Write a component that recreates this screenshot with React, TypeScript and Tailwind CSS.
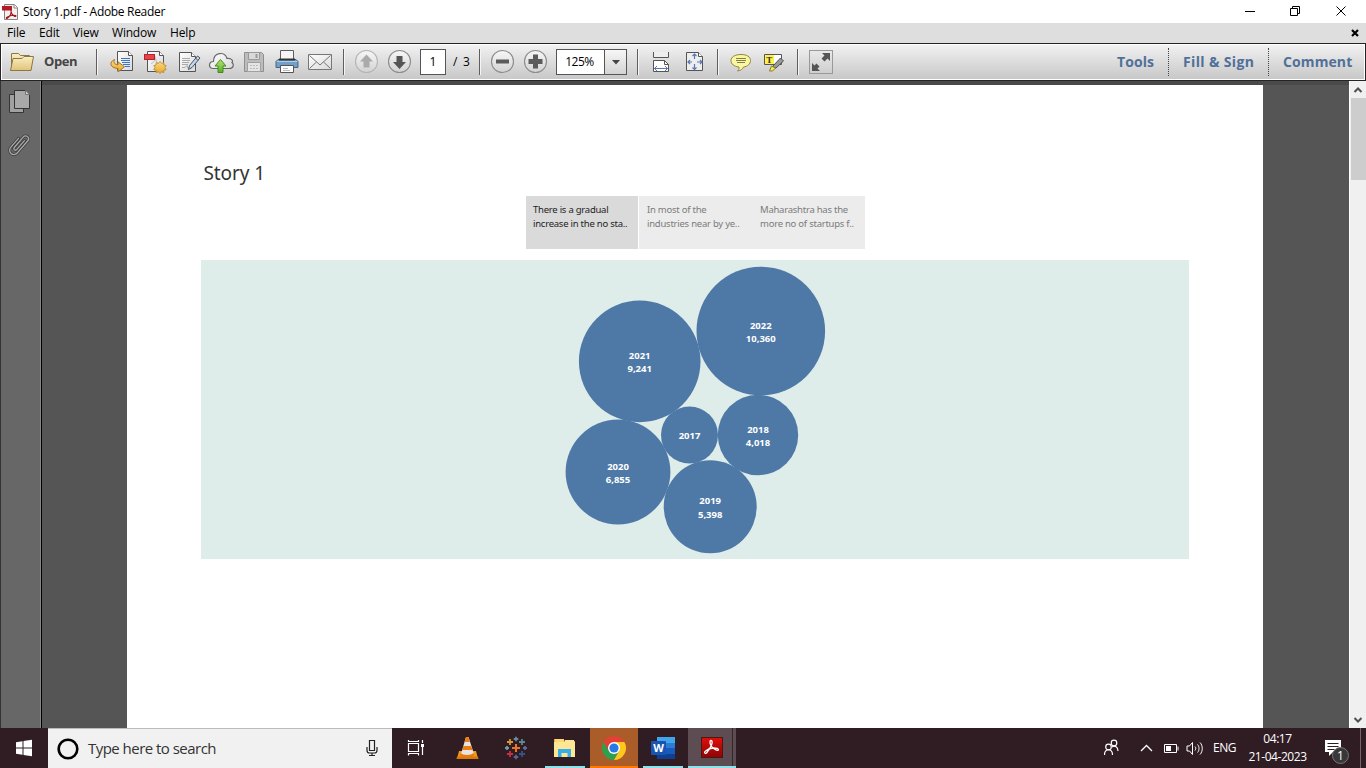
import type { ReactNode } from "react";

const ui = "font-['Open_Sans','Noto_Sans',sans-serif] whitespace-nowrap";

function Slot({ w = 33, children }: { w?: number; children: ReactNode }) {
  return (
    <svg width={w} height={34} viewBox={`0 0 ${w} 34`} className="shrink-0" fill="none">
      {children}
    </svg>
  );
}

function Divider({ className = "" }: { className?: string }) {
  return <div className={`h-[26px] w-[2px] shrink-0 border-l border-[#5e5e5e] bg-[#f5f5f5] ${className}`} />;
}

function RoundButton({ faded = false, children }: { faded?: boolean; children: ReactNode }) {
  return (
    <Slot>
      <circle cx="16.5" cy="16.5" r="11" fill="url(#btn)" stroke={faded ? "#b5b5b5" : "#8c8c8c"} strokeWidth="1.1" />
      {children}
    </Slot>
  );
}

function Defs() {
  return (
    <svg width="0" height="0" className="absolute">
      <defs>
        <linearGradient id="btn" x1="0" y1="0" x2="0" y2="1">
          <stop offset="0" stopColor="#f8f8f8" />
          <stop offset="1" stopColor="#d2d2d2" />
        </linearGradient>
        <linearGradient id="paper" x1="0" y1="0" x2="1" y2="1">
          <stop offset="0" stopColor="#fff" />
          <stop offset="1" stopColor="#d9d9d9" />
        </linearGradient>
        <linearGradient id="gold" x1="0" y1="0" x2="0" y2="1">
          <stop offset="0" stopColor="#fbdc7d" />
          <stop offset="1" stopColor="#e5a52f" />
        </linearGradient>
        <linearGradient id="manila" x1="0" y1="0" x2="0" y2="1">
          <stop offset="0" stopColor="#fbeec0" />
          <stop offset="1" stopColor="#dfc378" />
        </linearGradient>
        <linearGradient id="green" x1="0" y1="0" x2="0" y2="1">
          <stop offset="0" stopColor="#b6e86c" />
          <stop offset="1" stopColor="#58ad27" />
        </linearGradient>
        <linearGradient id="acro" x1="0" y1="0" x2="0" y2="1">
          <stop offset="0" stopColor="#e00f0b" />
          <stop offset="1" stopColor="#8c0505" />
        </linearGradient>
      </defs>
    </svg>
  );
}

function TitleBar() {
  return (
    <div className="flex h-[23px] shrink-0 items-center bg-white pl-[2px] pr-[20px]">
      <svg width="17" height="18" viewBox="0 0 17 18" fill="none">
        <path d="M2.500 1.500h10l3 3v12h-13z" fill="#f4f0ee" stroke="#8b8481" />
        <path d="M12 1.500v3.500h3.500" stroke="#8b8481" fill="#fff" />
        <path d="M9 7c.8 3-1 7-4 8.500-1 .2-.8-.8 0-1.300 3-1.700 6-2.200 8.500-1.700 1 .6 0 1.300-1 .8C10.500 12.300 9 10 9 7z" stroke="#a4141c" strokeWidth="1.100" />
        <rect x="0" y="3" width="10" height="4.500" fill="#b51a22" />
      </svg>
      <span className={`${ui} ml-[4px] text-[12px] leading-[22px] tracking-[-0.31px] text-black`}>Story 1.pdf - Adobe Reader</span>
      <div className="flex-1" />
      <svg width="102" height="12" viewBox="0 0 102 12" fill="none" stroke="#000" className="mb-[2px]">
        <path d="M1 6.500h10" />
        <path d="M46.500 3.500h7v7h-7zM48.500 3.500v-2h7v7h-2" />
        <path d="M92.500 1.500l9 9M101.500 1.500l-9 9" />
      </svg>
    </div>
  );
}

function MenuBar() {
  return (
    <div className={`${ui} flex h-[20px] shrink-0 items-center bg-[#dedede] pl-[7px] pr-[7px] text-[12px] leading-[20px] tracking-[-0.15px] text-black`}>
      <span className="w-[32px]">File</span>
      <span className="w-[34px]">Edit</span>
      <span className="w-[39px]">View</span>
      <span className="w-[58px] tracking-[-0.2px]">Window</span>
      <span>Help</span>
      <div className="flex-1" />
      <svg width="8" height="8" viewBox="0 0 8 8" stroke="#000" strokeWidth="2.200">
        <path d="M1 1l6 6M7 1L1 7" />
      </svg>
    </div>
  );
}

function Toolbar() {
  return (
    <div className="h-[38px] shrink-0 border border-[#242424] bg-white p-px">
      <div className="flex h-[34px] items-center bg-gradient-to-b from-[#f1f1f1] to-[#c8c8c8]">
        <Slot w={42}>
          <path d="M9.500 8.500h7l2 2h9v3h3l-2 12h-19z" fill="url(#manila)" stroke="#8b7849" />
          <path d="M8.500 25.500l2.500-12h9l2-2h9.500l-2.500 14z" fill="url(#manila)" stroke="#8b7849" />
        </Slot>
        <span className={`${ui} w-[52px] text-[13px] font-bold tracking-[-0.4px] text-[#454545]`}>Open</span>
        <Divider />
        <div className="w-[8px]" />
        <Slot>
          <g transform="translate(11 6)">
            <path d="M.5 .5h11l4 4v15h-15z" fill="url(#paper)" stroke="#555" />
            <path d="M11.500 .5v4h4" fill="#fff" stroke="#555" />
            <path d="M4 7.500h9M4 9.500h9M5 11.500h8M6 13.500h7M8 15.500h5" stroke="#3a78c5" />
          </g>
          <path d="M8.500 14.500c-5.500 2.500-5 8.500 3.500 9v3.500l6.500-5.200-6.500-5v3c-4-.3-4.500-2.500-3.500-5.300z" fill="url(#gold)" stroke="#a8741e" />
        </Slot>
        <Slot>
          <g transform="translate(8 6)">
            <path d="M.5 .5h12l4 4v16h-16z" fill="url(#paper)" stroke="#555" />
            <path d="M12.500 .5v4h4" fill="#fff" stroke="#555" />
            <path d="M4 12.500c3-1 5-4 4.500-7M9 8c0 3 1 4 3 5" stroke="#bbb" />
          </g>
          <rect x="5.500" y="9.500" width="10" height="5" fill="#e8434a" stroke="#b3252e" />
          <path d="M21 16.500l1.500 1.900 2.300-.8.1 2.400 2.300.6-1.200 2 1.200 2-2.300.6-.1 2.400-2.300-.8-1.500 1.800-1.500-1.800-2.300.8-.1-2.400-2.300-.6 1.200-2-1.200-2 2.300-.6.1-2.400 2.300.8z" fill="url(#gold)" stroke="#bd8429" strokeWidth=".8" />
        </Slot>
        <Slot>
          <g transform="translate(7 7)">
            <path d="M.5 .5h12l4 4v15h-16z" fill="url(#paper)" stroke="#555" />
            <path d="M12.500 .5v4h4" fill="#fff" stroke="#555" />
            <path d="M3 6.500h8M3 8.500h8M3 10.500h7M3 12.500h6M3 15.500h3l2-2 1 3" stroke="#aaa" />
          </g>
          <path d="M25.500 11l2.500 2-8 9.500-3.500 2 1-4z" fill="#c2d8ee" stroke="#45535f" />
          <path d="M23.500 13l2.500 2.500" stroke="#45535f" />
        </Slot>
        <Slot>
          <path d="M8 23.500c-5 0-4.500-7 .5-7 0-9 11-11 13.500-3 5-.5 6.500 3 5 4 2.500 2 1.500 6-3 6z" fill="url(#paper)" stroke="#666" strokeWidth="1.200" />
          <path d="M15.500 14.500l5.500 6.500h-3v6.500h-5V21h-3z" fill="url(#green)" stroke="#458b22" />
        </Slot>
        <Slot>
          <path d="M6.500 7.500h17l2 2v17h-19z" fill="#bcbcbc" stroke="#8f8f8f" />
          <path d="M10.500 7.500h11v7h-11z" fill="#d9d9d9" stroke="#999" />
          <path d="M17.500 9h2v4h-2z" fill="#999" />
          <path d="M9.500 17.500h13v9h-13z" fill="#e4e4e4" stroke="#a0a0a0" />
          <path d="M12 20.500h8M12 23.500h8" stroke="#bbb" strokeDasharray="2 1" />
        </Slot>
        <Slot>
          <path d="M9.500 5.500h13v10h-13z" fill="#f5f5f5" stroke="#5e5e5e" />
          <path d="M7 14.500h18l2 2v6h-22v-6z" fill="#72a0ca" stroke="#476480" />
          <path d="M6 16.500h20" stroke="#add0ed" />
          <path d="M8 14.500h16" stroke="#333" strokeWidth="2" />
          <path d="M9.500 20.500h13v7h-13z" fill="#fff" stroke="#555" />
          <path d="M12 23.500h5M12 25.500h7" stroke="#bbb" />
        </Slot>
        <Slot>
          <path d="M4.500 9.500h23v15h-23z" fill="url(#paper)" stroke="#777" />
          <path d="M5.500 10.500L16 20l10.500-9.500M5.500 23.500l7-6.500M26.500 23.500L19.500 17" stroke="#777" />
        </Slot>
        <div className="w-[6px]" />
        <Divider />
        <div className="w-[5px]" />
        <RoundButton faded>
          <path d="M16.500 9.500l6.500 7h-3.500v6h-6v-6H10z" fill="#aaa" />
        </RoundButton>
        <RoundButton>
          <path d="M16.500 24l-6.500-7h3.500v-6h6v6H23z" fill="#555" />
        </RoundButton>
        <div className={`${ui} ml-[4px] flex h-[26px] w-[26px] items-center justify-center border border-[#555] bg-white text-[12px]`}>1</div>
        <span className={`${ui} ml-[7px] w-[26px] text-[12px] tracking-[1.200px]`}>/ 3</span>
        <Divider />
        <div className="w-[5px]" />
        <RoundButton>
          <path d="M10 14.500h13v4H10z" fill="#5b5b5b" />
        </RoundButton>
        <RoundButton>
          <path d="M14 9.500h5V14h4.500v5H19v4.500h-5V19H9.500v-5H14z" fill="#5b5b5b" />
        </RoundButton>
        <div className={`${ui} ml-[4px] flex h-[26px] w-[71px] border border-[#555] bg-white text-[12px]`}>
          <span className="flex w-[47px] items-center justify-center pr-[2px] tracking-[-0.5px]">125%</span>
          <span className="flex flex-1 items-center justify-center border-l border-[#555] bg-gradient-to-b from-[#f7f7f7] to-[#d3d3d3]">
            <svg width="8" height="5" viewBox="0 0 8 5"><path d="M0 0h8L4 4.500z" fill="#444" /></svg>
          </span>
        </div>
        <Divider className="ml-[10px]" />
        <div className="w-[6px]" />
        <Slot>
          <path d="M8.500 7v5.500h15V7" fill="#eee" stroke="#555" />
          <path d="M8.500 26.500v-11h11l4 4v7z" fill="#fff" stroke="#555" />
          <path d="M19.500 15.500v4h4" stroke="#555" />
          <path d="M9 23.500h14M12 21l-2.500 2.500L12 26M20 21l2.500 2.500L20 26" stroke="#5c77b0" />
        </Slot>
        <Slot>
          <path d="M8.500 7.500h12l4 4v14h-16z" fill="#eee" stroke="#555" />
          <path d="M20.500 7.500v4h4" fill="#fff" stroke="#555" />
          <path d="M16.500 9v5M16.500 19v5M10 17h4M19 17h5M14.500 11l2-2 2 2M14.500 22.500l2 2 2-2M12 15l-2 2 2 2M22 15l2 2-2 2" stroke="#5c77b0" strokeWidth="1.200" />
        </Slot>
        <Divider className="ml-[6px]" />
        <div className="w-[6px]" />
        <Slot>
          <path d="M16 9.500c6 0 9.500 2.500 9.500 6s-3 6-7 6.500c-1 2.500-3 3.500-6 4 1-1 2-2 1.500-4-5-.5-8-3-8-6.500s4-6 10-6z" fill="#fbf6a0" stroke="#8f8643" />
          <path d="M11 13.500h10M11 15.500h10M12 17.500h8" stroke="#756f3f" strokeWidth=".9" />
        </Slot>
        <Slot>
          <path d="M6.500 9.500h17v10h-17z" fill="#fff" stroke="#555" />
          <path d="M7 10h9v9H7z" fill="#fff04e" />
          <text x="8.300" y="18" fontSize="9" fontWeight="700" fontFamily="Liberation Serif" fill="#333">T</text>
          <path d="M22.500 13l3 3-7.500 7-4-1z" fill="#999" stroke="#505050" />
          <path d="M13.500 21l4 2-3 3h-3z" fill="#f4ed44" stroke="#817b31" />
        </Slot>
        <Divider className="ml-[6px]" />
        <div className="ml-[10px] flex size-[24px] shrink-0 items-center justify-center border border-[#999] bg-gradient-to-b from-[#e8e8e8] to-[#cfcfcf]">
          <svg width="20" height="20" viewBox="0 0 20 20" fill="#555" className="shrink-0">
            <path d="M11 1h8v8l-2.500-2.500-3 3-3-3 3-3zM1 11l2.500 2.500 2-2 3 3-2 2L9 19H1z" />
          </svg>
        </div>
        <div className="flex-1" />
        <div className={`${ui} flex h-[28px] items-center pb-[1px] text-[14px] font-bold text-[#50709a]`}>
          <span className="w-[51px] tracking-[0.1px]">Tools</span>
          <span className="flex h-[28px] w-[100px] items-center border-l border-dotted border-[#444] pl-[14px] tracking-[0.35px]">Fill &amp; Sign</span>
          <span className="flex h-[28px] w-[96px] items-center border-l border-dotted border-[#444] pl-[14px] tracking-[0.1px]">Comment</span>
        </div>
      </div>
    </div>
  );
}

const bubbles = [
  { year: "2022", count: "10,360", x: 559.800, y: 71, r: 64.300 },
  { year: "2021", count: "9,241", x: 438.700, y: 101.400, r: 60.800 },
  { year: "2018", count: "4,018", x: 557, y: 175, r: 40.200 },
  { year: "2017", count: "", x: 488.500, y: 175, r: 28.500 },
  { year: "2020", count: "6,855", x: 417, y: 212, r: 52.400 },
  { year: "2019", count: "5,398", x: 509.200, y: 246.800, r: 46.500 },
];

function Story() {
  return (
    <div className="flex h-full w-[1136px] flex-col bg-white pl-[74px] pr-[74px] pt-[75px]">
      <h1 className="h-[36px] pl-[2.500px] font-['Noto_Sans','Open_Sans',sans-serif] text-[19px] leading-[26px] tracking-[-0.1px] whitespace-nowrap text-[#333]">Story 1</h1>
      <div className="ml-[325px] flex h-[53px] w-[339px] font-['Noto_Sans','Open_Sans',sans-serif] text-[9.500px] leading-[14px] tracking-[-0.24px] whitespace-nowrap">
        <div className="w-[112px] bg-[#dadada] pl-[7px] pt-[7px] text-[#222]">There is a gradual<br />increase in the no sta..</div>
        <div className="ml-px w-[113px] bg-[#ececec] pl-[8px] pt-[7px] text-[#7b7b7b]">In most of the<br />industries near by ye..</div>
        <div className="w-[113px] bg-[#ececec] pl-[8px] pt-[7px] text-[#7b7b7b]">Maharashtra has the<br />more no of startups f..</div>
      </div>
      <svg width="988" height="299" viewBox="0 0 988 299" className="mt-[11px] shrink-0 bg-[#dfedea]">
        {bubbles.map((b) => (
          <g key={b.year}>
            <circle cx={b.x} cy={b.y} r={b.r} fill="#4e79a7" />
            <g fill="#fff" fontFamily="Noto Sans, Open Sans, sans-serif" fontSize="9.500" fontWeight="700" textAnchor="middle">
              <text x={b.x} y={b.count ? Math.round(b.y - 2.500) : b.y + 4}>{b.year}</text>
              {b.count && <text x={b.x} y={Math.round(b.y + 11)}>{b.count}</text>}
            </g>
          </g>
        ))}
      </svg>
    </div>
  );
}

function Workspace() {
  return (
    <div className="flex h-[647px] shrink-0 bg-[#555]">
      <div className="w-[42px] border-l border-[#333] bg-[#676767] shadow-[inset_-1px_0_#000,inset_-2px_0_#858585]">
        <svg width="40" height="84" viewBox="0 0 40 84" fill="none">
          <path d="M8.500 13.500h14v18h-14z" fill="#a1a1a1" stroke="#353535" />
          <path d="M13.500 9.500h11l4 4v14h-15z" fill="#a9a9a9" stroke="#353535" />
          <path d="M24.500 9.500v4h4" fill="#ccc" stroke="#777" />
          <g transform="translate(18 63.500) rotate(41) scale(1.080)" strokeLinecap="round">
            <path d="M1.500 -6v11a1.500 1.500 0 0 1-3 0V-8a2.700 2.700 0 0 1 5.400 0V7a4 4 0 0 1-8 0V-4" stroke="#3c3c3c" strokeWidth="2.600" />
            <path d="M1.500 -6v11a1.500 1.500 0 0 1-3 0V-8a2.700 2.700 0 0 1 5.400 0V7a4 4 0 0 1-8 0V-4" stroke="#aaa" strokeWidth="1.200" />
          </g>
        </svg>
      </div>
      <div className="flex flex-1 justify-start border-t-4 border-[#4a4a4a] pl-[85px]">
        <Story />
      </div>
      <div className="flex w-[17px] flex-col items-center border-l border-white bg-[#f0f0f0]">
        <svg width="15" height="17" viewBox="0 0 15 17" fill="none" stroke="#505050" strokeWidth="2"><path d="M3.500 11L7 7.500l3.500 3.500" /></svg>
        <div className="h-[82px] w-[15px] bg-[#cdcdcd]" />
        <div className="flex-1" />
        <svg width="15" height="17" viewBox="0 0 15 17" fill="none" stroke="#505050" strokeWidth="2"><path d="M3.500 7L7 10.500 10.500 7" /></svg>
      </div>
    </div>
  );
}

function TaskIcon({ w, className = "", children }: { w: number; className?: string; children: ReactNode }) {
  return (
    <svg width={w} height="40" viewBox={`0 0 ${w} 40`} className={`shrink-0 ${className}`} fill="none">
      {children}
    </svg>
  );
}

function plus(x: number, y: number, s: number, c: string) {
  return <path key={`${x}-${y}`} d={`M${x - s} ${y}h${s * 2}M${x} ${y - s}v${s * 2}`} stroke={c} strokeWidth={s > 3.500 ? 2 : 1.800} />;
}

function Taskbar() {
  return (
    <div className="flex h-[40px] shrink-0 bg-[#301c23]">
      <TaskIcon w={48}>
        <path d="M16 14.200l6.500-1v6.300H16zM23.500 13l8.500-1.200v7.700h-8.500zM16 20.500h6.500v6.300l-6.500-1zM23.500 20.500H32v7.700L23.500 27z" fill="#fff" />
      </TaskIcon>
      <div className="flex w-[344px] items-center border-t border-[#bcbcbc] bg-[#f1f1f1]">
        <svg width="40" height="38" viewBox="0 0 40 38"><circle cx="20" cy="19" r="9.300" fill="none" stroke="#000" strokeWidth="2.600" /></svg>
        <span className={`${ui} flex-1 text-[15px] tracking-[-0.53px] text-[#333]`}>Type here to search</span>
        <svg width="40" height="38" viewBox="0 0 40 38" fill="none" stroke="#222" strokeWidth="1.200">
          <path d="M17.500 10.500h5v10h-5zM15 17v3.500c0 2 1 2.500 2.500 2.500h5c1.500 0 2.500-.5 2.500-2.500V17M20 23v2.500M17 25.500h6" />
        </svg>
      </div>
      <TaskIcon w={48}>
        <path d="M16.500 15.500h10v8h-10zM16.500 12v1.500h10V12M16.500 27.500v-2h10v2M30.500 12v3M30.500 19v8" stroke="#fff" strokeWidth="1.200" />
        <path d="M29 16h3v3h-3z" fill="#fff" />
      </TaskIcon>
      <TaskIcon w={50}>
        <path d="M19 23h17l2 8H17z" fill="#f49a1c" />
        <path d="M17 28.500h21l.5 2.500h-22z" fill="#d67a08" />
        <path d="M26 9h2.500L34 26c-2 2.500-11 2.500-13 0z" fill="#e5e5e5" />
        <path d="M25.500 10.500L26 9h2.500l1.500 5h-5.500zM23.500 18h7.800l1.200 4h-10.300z" fill="#f07c12" />
        <path d="M20.500 25c2 2.500 11 2.500 13 0l1 2.500c-3 2.500-12 2.500-15 0z" fill="#eb7a0d" />
      </TaskIcon>
      <TaskIcon w={51}>
        {plus(26, 20, 4, "#e8762b")}
        {plus(26, 11, 2.300, "#65889b")}
        {plus(26, 29, 2.300, "#5c6591")}
        {plus(20, 14, 3, "#d99735")}
        {plus(32, 14, 3, "#5b8795")}
        {plus(20, 26, 3, "#c72f45")}
        {plus(32, 26, 3, "#2e568a")}
        {plus(17, 20, 2, "#7199a6")}
        {plus(35, 20, 2, "#5e6890")}
      </TaskIcon>
      <TaskIcon w={49}>
        <path d="M13 11h9l2 2h10v16H13z" fill="#e8ac2d" />
        <path d="M13 14h21v15H13z" fill="#ffe694" />
        <path d="M14 11h9v3h-9z" fill="#f9d875" />
        <path d="M24 12h9v3h-9z" fill="#ffe694" />
        <path d="M17 21h13v8h-3.500v-4h-6v4H17z" fill="#37aee8" />
        <path d="M4 38h40v2H4z" fill="#8de1e9" />
      </TaskIcon>
      <TaskIcon w={48} className="bg-[#ab5d29]">
        <circle cx="24" cy="20" r="12" fill="#e34133" />
        <path d="M13.600 14A12 12 0 0 0 24 32l5.200-9L18.800 23z" fill="#2da04d" />
        <path d="M34.400 14A12 12 0 0 1 24 32l5.200-9L24 14z" fill="#fbc81b" />
        <circle cx="24" cy="20" r="6" fill="#fff" />
        <circle cx="24" cy="20" r="4.600" fill="#2878e5" />
        <path d="M0 38h48v2H0z" fill="#ff7900" />
      </TaskIcon>
      <TaskIcon w={50}>
        <path d="M19 9h18v6H19z" fill="#41a5ee" />
        <path d="M19 15h18v5H19z" fill="#2b7cd3" />
        <path d="M19 20h18v6H19z" fill="#185abd" />
        <path d="M19 26h18v5H19z" fill="#103f91" />
        <rect x="13" y="13" width="15" height="14" rx="1" fill="#1855b3" />
        <text x="20.500" y="24" fontFamily="Open Sans, sans-serif" fontSize="11" fontWeight="700" textAnchor="middle" fill="#fff">W</text>
        <path d="M5 38h40v2H5z" fill="#8de1e9" />
      </TaskIcon>
      <TaskIcon w={48} className="bg-[#5d4c52]">
        <path d="M44 0h1v40h-1z" fill="#34252b" />
        <rect x="13.500" y="9.500" width="21" height="20" fill="url(#acro)" stroke="#4e1515" />
        <path d="M23 12.500c2.500 0 1 6-4.500 12.500-1.500 1-3-.5-1-2 3.500-3 8-3.500 12-2.500 2 1 .5 2.500-1.500 1.500-3-1.500-6.500-5-6-8 0-1 .3-1.500 1-1.500z" stroke="#fff" strokeWidth="1.300" />
        <path d="M0 38h48v2H0z" fill="#8de1e9" />
      </TaskIcon>
      <div className="flex-1" />
      <TaskIcon w={34}>
        <g stroke="#fff" strokeWidth="1.200">
          <circle cx="10.500" cy="19" r="2.800" /><circle cx="16" cy="15" r="2.800" />
          <path d="M6.500 27c0-7 8-7 8 0M14 19c3-2 6 0 6 4" />
        </g>
      </TaskIcon>
      <TaskIcon w={71}>
        <path d="M9 23l5.500-5.500L20 23" stroke="#fff" strokeWidth="1.300" />
        <path d="M32.500 16.500h12v8h-12zM46 18.500v4" stroke="#fff" />
        <path d="M34 18h5v5h-5z" fill="#fff" />
        <path d="M55.500 18v5h2.500l3 3.500v-12L58 18zM63.500 18.500c1 1 1 2.500 0 4M66 16.500c2 2 2 6 0 8M68.500 14.500c3 3 3 9 0 12" stroke="#fff" transform="translate(-.5 0)" />
      </TaskIcon>
      <div className={`${ui} flex w-[43px] items-center pl-[10px] text-[12px] tracking-[-0.5px] text-white`}>ENG</div>
      <div className={`${ui} mr-[7px] flex w-[63px] flex-col items-center pt-[2px] text-[12px] leading-[18px] tracking-[-0.45px] text-white`}>
        <span>04:17</span>
        <span>21-04-2023</span>
      </div>
      <TaskIcon w={45}>
        <path d="M9 12h16v12H17l-4 4v-4H9z" fill="#fff" />
        <path d="M11.500 15.500h11M11.500 18.500h11M11.500 21.500h7" stroke="#301c23" />
        <circle cx="24.500" cy="27.500" r="8" fill="#383838" stroke="#777" />
        <text x="24.500" y="31.500" fontFamily="Open Sans, sans-serif" fontSize="12" textAnchor="middle" fill="#fff">1</text>
        <path d="M44.500 0v40" stroke="#75666b" />
      </TaskIcon>
      <div className="w-[5px]" />
    </div>
  );
}

export default function App() {
  return (
    <div className="flex h-[768px] w-[1366px] flex-col overflow-hidden">
      <Defs />
      <TitleBar />
      <MenuBar />
      <Toolbar />
      <Workspace />
      <Taskbar />
    </div>
  );
}
